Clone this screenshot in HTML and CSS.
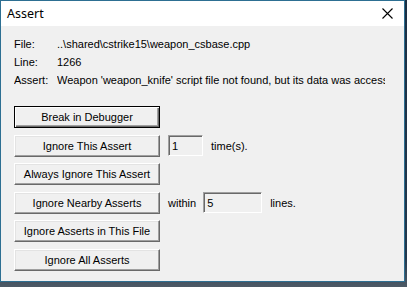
FILE: index.html
```html
<!DOCTYPE html>
<html lang="en">
<head>
  <meta charset="UTF-8">
  <title>Assert</title>
  <link rel="stylesheet" href="styles.css">
</head>
<body>

<div class="window">
  <div class="titlebar">
    <span class="title">Assert</span>
    <svg class="close" width="11" height="11" viewBox="0 0 11 11">
      <path d="M0.5 0.5 L10.5 10.5 M10.5 0.5 L0.5 10.5" stroke="#000" stroke-width="1.1" fill="none"/>
    </svg>
  </div>

  <div class="client">
    <div class="info">
      <span class="key">File:</span><span class="val">..\shared\cstrike15\weapon_csbase.cpp</span>
      <span class="key">Line:</span><span class="val">1266</span>
      <span class="key">Assert:</span><span class="val">Weapon 'weapon_knife' script file not found, but its data was accessed</span>
    </div>

    <div class="actions">
      <div class="row">
        <button class="btn default">Break in Debugger</button>
      </div>
      <div class="row">
        <button class="btn">Ignore This Assert</button>
        <input class="field short" type="text" value="1">
        <span class="note">time(s).</span>
      </div>
      <div class="row">
        <button class="btn">Always Ignore This Assert</button>
      </div>
      <div class="row">
        <button class="btn">Ignore Nearby Asserts</button>
        <span class="note">within</span>
        <input class="field long" type="text" value="5">
        <span class="note">lines.</span>
      </div>
      <div class="row">
        <button class="btn">Ignore Asserts in This File</button>
      </div>
      <div class="row">
        <button class="btn">Ignore All Asserts</button>
      </div>
    </div>
  </div>
</div>

</body>
</html>
```

FILE: styles.css
```css
body {
  margin: 0;
  width: 407px;
  height: 287px;
  overflow: hidden;
  background: linear-gradient(180deg, #1b2f44 0%, #22384d 90%, #4d5a66 100%);
  font-family: "Liberation Sans", Arial, sans-serif;
}
.window {
  width: 403px;
  height: 280px;
  border: 1px solid #2d6f92;
  background: #f0f0f0;
  display: flex;
  flex-direction: column;
}
.titlebar {
  height: 25px;
  background: #ffffff;
  display: flex;
  align-items: center;
  justify-content: space-between;
  padding: 0 11px 0 6px;
}
.title {
  font-family: "Noto Sans", "Open Sans", sans-serif;
  font-size: 12.5px;
  color: #000;
  margin-top: -1px;
}
.close {
  display: block;
  margin-top: -1px;
}
.client {
  flex: 1;
  padding: 9px 0 0 13px;
  font-size: 11px;
  color: #000;
}
.info {
  display: grid;
  grid-template-columns: 43px 1fr;
  line-height: 18px;
  white-space: nowrap;
  overflow: hidden;
  width: 371px;
}
.info .val {
  overflow: hidden;
}
.actions {
  margin-top: 17px;
  display: flex;
  flex-direction: column;
  gap: 6.6px;
}
.row {
  display: flex;
  align-items: center;
  height: 22px;
}
.btn {
  width: 146px;
  height: 22px;
  margin: 0;
  padding: 0;
  font-family: "Liberation Sans", Arial, sans-serif;
  font-size: 11px;
  color: #000;
  background: #f0f0f0;
  border: 1px solid;
  border-color: #ffffff #696969 #696969 #ffffff;
  box-shadow: inset -1px -1px 0 #a0a0a0, inset 1px 1px 0 #e3e3e3;
}
.btn.default {
  border-color: #000;
  box-shadow: inset 1px 1px 0 #fff, inset -1px -1px 0 #696969, inset -2px -2px 0 #a0a0a0;
}
.field {
  height: 21px;
  box-sizing: border-box;
  margin: 0;
  padding: 0 3px;
  font-family: "Liberation Sans", Arial, sans-serif;
  font-size: 11px;
  color: #000;
  background: #f0f0f0;
  border: 1px solid;
  border-color: #a0a0a0 #ffffff #ffffff #a0a0a0;
  box-shadow: inset 1px 1px 0 #696969;
}
.field.short {
  width: 35px;
  margin-left: 8px;
}
.field.long {
  width: 59px;
  margin-left: 7px;
}
.note {
  margin-left: 8px;
}
.row .note:first-of-type {
  margin-left: 8px;
}
```
